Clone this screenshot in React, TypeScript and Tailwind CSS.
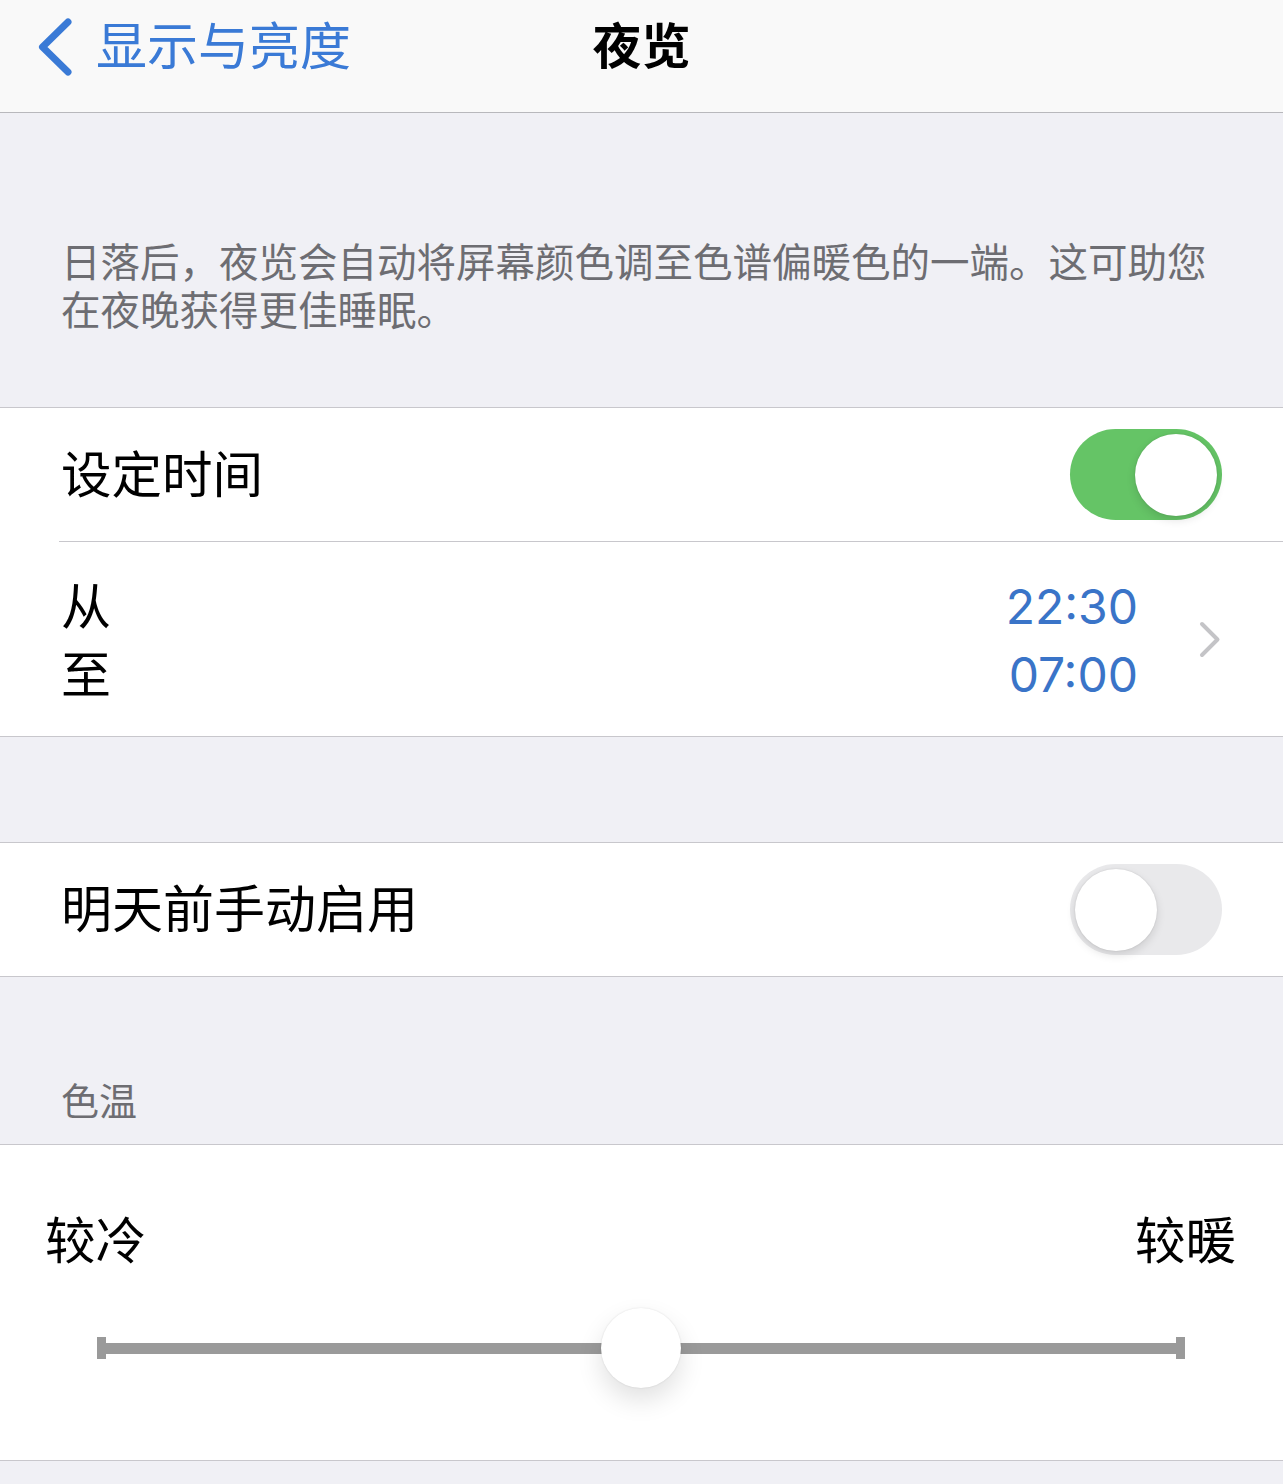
import React from "react";

const font = { fontFamily: 'Inter, "Noto Sans CJK SC", sans-serif' };

function Toggle({ on }: { on: boolean }) {
  return (
    <div
      className={`w-[152px] h-[91px] rounded-full flex items-center px-[5px] ${
        on ? "bg-[#65c466] justify-end" : "bg-[#e9e9eb] justify-start"
      }`}
    >
      <div className="w-[82px] h-[82px] rounded-full bg-white shadow-[0_4px_10px_rgba(0,0,0,0.12),0_0_2px_rgba(0,0,0,0.12)]" />
    </div>
  );
}

export default function App() {
  return (
    <div className="w-[1283px] min-h-[1484px] bg-[#f0f0f5] [text-spacing-trim:space-all]" style={font}>
      {/* Nav bar */}
      <div className="h-[113px] bg-[#f9f9f9] border-b border-[#b8b8bc] grid grid-cols-3 items-center">
        <div className="flex items-center pl-[38px] pb-[18px]">
          <svg width="34" height="58" viewBox="0 0 34 58" fill="none">
            <path
              d="M30 4 L4.5 29 L30 54"
              stroke="#3a7ad6"
              strokeWidth="7"
              strokeLinecap="round"
              strokeLinejoin="round"
            />
          </svg>
          <span className="ml-[24px] text-[51px] leading-[60px] text-[#3a7ad6] whitespace-nowrap">
            显示与亮度
          </span>
        </div>
        <div className="text-center text-[49px] leading-[60px] font-bold text-black pb-[18px]">
          夜览
        </div>
        <div />
      </div>

      {/* Description */}
      <div className="pt-[126px] pb-[72px] pl-[61px] pr-[60px] text-[39.5px] leading-[48px] text-[#6d6d72]">
        日落后，夜览会自动将屏幕颜色调至色谱偏暖色的一端。这可助您在夜晚获得更佳睡眠。
      </div>

      {/* Schedule */}
      <div className="bg-white border-y border-[#c8c7cc]">
        <div className="h-[133px] flex items-center justify-between pl-[61px] pr-[61px]">
          <span className="text-[50.5px] leading-[60px] text-black">设定时间</span>
          <Toggle on />
        </div>
        <div className="ml-[59px] border-t border-[#c8c7cc]" />
        <div className="h-[194px] flex items-center justify-between pl-[61px] pr-[62px]">
          <div className="flex flex-col text-[50px] leading-[68px] text-black pt-[3px]">
            <span>从</span>
            <span>至</span>
          </div>
          <div className="flex items-center">
            <div className="flex flex-col items-end text-[48px] leading-[68px] text-[#3a74c8] pt-[4px]">
              <span>22:30</span>
              <span>07:00</span>
            </div>
            <svg className="ml-[61px]" width="22" height="37" viewBox="0 0 22 37" fill="none">
              <path
                d="M3 3 L18.5 18.5 L3 34"
                stroke="#c4c4c7"
                strokeWidth="4"
                strokeLinecap="round"
                strokeLinejoin="round"
              />
            </svg>
          </div>
        </div>
      </div>

      <div className="h-[105px]" />

      {/* Manual enable */}
      <div className="bg-white border-y border-[#c8c7cc]">
        <div className="h-[133px] flex items-center justify-between pl-[61px] pr-[61px]">
          <span className="text-[51px] leading-[60px] text-black">明天前手动启用</span>
          <Toggle on={false} />
        </div>
      </div>

      {/* Color temperature */}
      <div className="pt-[100px] pb-[19px] pl-[61px] text-[38px] leading-[48px] text-[#6d6d72]">
        色温
      </div>
      <div className="bg-white border-y border-[#c8c7cc] pt-[66px] pb-[64px]">
        <div className="flex justify-between pl-[45px] pr-[47px] text-[50.5px] leading-[60px] text-black">
          <span>较冷</span>
          <span>较暖</span>
        </div>
        <div className="mt-[29px] h-[96px] pl-[97px] pr-[98px] flex items-center">
          <div className="relative flex-1 flex items-center">
            <div className="w-[9px] h-[22px] bg-[#9a9a9a]" />
            <div className="flex-1 h-[11px] bg-[#9a9a9a]" />
            <div className="w-[9px] h-[22px] bg-[#9a9a9a]" />
            <div className="absolute left-[504px] top-1/2 -translate-y-1/2 w-[80px] h-[80px] rounded-full bg-white shadow-[0_12px_26px_rgba(0,0,0,0.12),0_0_2px_rgba(0,0,0,0.12)]" />
          </div>
        </div>
      </div>
    </div>
  );
}
